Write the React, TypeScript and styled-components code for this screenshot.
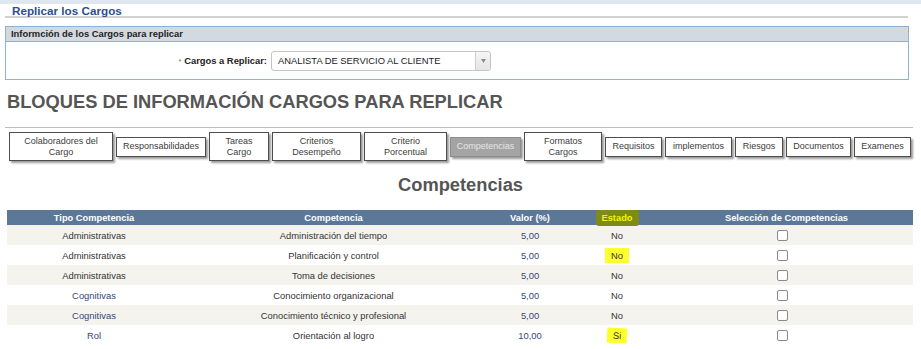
import styled, { createGlobalStyle } from "styled-components";

const GlobalStyle = createGlobalStyle`
  html, body {
    margin: 0;
    padding: 0;
    background: #ffffff;
    font-family: "Liberation Sans", Arial, sans-serif;
  }
`;

interface TabItem {
    label: string[];
    width: number;
    active?: boolean;
}

const tabs: TabItem[] = [
    { label: ["Colaboradores del", "Cargo"], width: 104 },
    { label: ["Responsabilidades"], width: 90 },
    { label: ["Tareas", "Cargo"], width: 60 },
    { label: ["Criterios", "Desempeño"], width: 89 },
    { label: ["Criterio", "Porcentual"], width: 83 },
    { label: ["Competencias"], width: 71, active: true },
    { label: ["Formatos", "Cargos"], width: 78 },
    { label: ["Requisitos"], width: 57 },
    { label: ["implementos"], width: 67 },
    { label: ["Riesgos"], width: 48 },
    { label: ["Documentos"], width: 65 },
    { label: ["Examenes"], width: 57 },
];

interface Row {
    tipo: string;
    competencia: string;
    valor: string;
    estado: string;
    mark?: "flat" | "tilt";
    blue?: boolean;
}

const rows: Row[] = [
    { tipo: "Administrativas", competencia: "Administración del tiempo", valor: "5,00", estado: "No" },
    { tipo: "Administrativas", competencia: "Planificación y control", valor: "5,00", estado: "No", mark: "flat" },
    { tipo: "Administrativas", competencia: "Toma de decisiones", valor: "5,00", estado: "No" },
    { tipo: "Cognitivas", competencia: "Conocimiento organizacional", valor: "5,00", estado: "No", blue: true },
    { tipo: "Cognitivas", competencia: "Conocimiento técnico y profesional", valor: "5,00", estado: "No", blue: true },
    { tipo: "Rol", competencia: "Orientación al logro", valor: "10,00", estado: "Si", mark: "tilt", blue: true },
];

const App = () => {
    return (
        <Page>
            <GlobalStyle />
            <TopBar />
            <TitleBar>Replicar los Cargos</TitleBar>

            <Panel>
                <PanelHeader>Informción de los Cargos para replicar</PanelHeader>
                <PanelBody>
                    <FieldLabel>
                        <Required>*</Required> Cargos a Replicar:
                    </FieldLabel>
                    <Select>
                        <span className="value">ANALISTA DE SERVICIO AL CLIENTE</span>
                        <span className="arrow">
                            <svg width="5" height="4" viewBox="0 0 5 4">
                                <path d="M0 0 L5 0 L2.5 4 Z" fill="#8a8a8a" />
                            </svg>
                        </span>
                    </Select>
                </PanelBody>
            </Panel>

            <BlockTitle>BLOQUES DE INFORMACIÓN CARGOS PARA REPLICAR</BlockTitle>
            <Rule />

            <TabRow>
                {tabs.map((t) => (
                    <Tab key={t.label.join(" ")} $width={t.width} $tall={t.label.length > 1} $active={t.active}>
                        {t.label.map((l) => (
                            <span key={l}>{l}</span>
                        ))}
                    </Tab>
                ))}
            </TabRow>

            <SectionTitle>Competencias</SectionTitle>

            <Table>
                <colgroup>
                    <col style={{ width: 174 }} />
                    <col style={{ width: 305 }} />
                    <col style={{ width: 88 }} />
                    <col style={{ width: 86 }} />
                    <col style={{ width: 253 }} />
                </colgroup>
                <thead>
                    <tr>
                        <th>Tipo Competencia</th>
                        <th>Competencia</th>
                        <th>Valor (%)</th>
                        <th>
                            <HeadMark>Estado</HeadMark>
                        </th>
                        <th>Selección de Competencias</th>
                    </tr>
                </thead>
                <tbody>
                    {rows.map((r, i) => (
                        <BodyRow key={r.competencia} $shaded={i % 2 === 0}>
                            <Cell $blue={r.blue}>{r.tipo}</Cell>
                            <Cell>{r.competencia}</Cell>
                            <Cell $blue>{r.valor}</Cell>
                            <Cell>
                                {r.mark ? <Mark $tilt={r.mark === "tilt"}>{r.estado}</Mark> : r.estado}
                            </Cell>
                            <Cell>
                                <Check />
                            </Cell>
                        </BodyRow>
                    ))}
                </tbody>
            </Table>
        </Page>
    );
};

const Page = styled.div`
    width: 921px;
    height: 349px;
    overflow: hidden;
    background: #fff;
`;

const TopBar = styled.div`
    height: 4px;
    background: #dfe6ef;
`;

const TitleBar = styled.div`
    margin: 0 13px 0 5px;
    padding: 1px 7px 0;
    height: 11px;
    line-height: 11px;
    font-size: 11.7px;
    font-weight: bold;
    color: #2d4f8f;
    border-bottom: 2px solid #d2d2d2;
`;

const Panel = styled.div`
    margin: 8px 12px 0 5px;
    border: 1px solid #8fb1d3;
`;

const PanelHeader = styled.div`
    height: 14px;
    line-height: 14px;
    padding-left: 5px;
    background: #d2d9e1;
    border-bottom: 1px solid #8fb1d3;
    font-size: 9.4px;
    font-weight: bold;
    color: #1e1e1e;
`;

const PanelBody = styled.div`
    height: 37px;
    display: flex;
    align-items: center;
    gap: 4px;
`;

const FieldLabel = styled.div`
    width: 261px;
    text-align: right;
    font-size: 9.4px;
    font-weight: bold;
    color: #222;
`;

const Required = styled.span`
    color: #6b7f9e;
    font-size: 8px;
    font-weight: normal;
`;

const Select = styled.div`
    width: 218px;
    height: 18px;
    display: flex;
    border: 1px solid #c4c4c4;
    border-radius: 3px;
    background: #fff;

    .value {
        flex: 1;
        padding-left: 6px;
        line-height: 17px;
        font-size: 9.4px;
        color: #222;
    }

    .arrow {
        width: 14px;
        display: flex;
        align-items: center;
        justify-content: center;
        border-left: 1px solid #cfcfcf;
        background: linear-gradient(#f6f6f6, #e4e4e4);
        border-radius: 0 3px 3px 0;
    }
`;

const BlockTitle = styled.h1`
    margin: 11px 0 0;
    padding-left: 7px;
    font-size: 18.3px;
    line-height: 22px;
    font-weight: bold;
    color: #555;
`;

const Rule = styled.div`
    margin: 14px 8px 0 5px;
    height: 1px;
    background: #bdbdbd;
`;

const TabRow = styled.div`
    margin-top: 4px;
    padding-left: 9px;
    height: 29px;
    display: flex;
    align-items: center;
    gap: 3px;
`;

const Tab = styled.div<{ $width: number; $tall: boolean; $active?: boolean }>`
    box-sizing: border-box;
    width: ${(p) => p.$width}px;
    height: ${(p) => (p.$tall ? 29 : 20)}px;
    display: flex;
    flex-direction: column;
    align-items: center;
    justify-content: center;
    border: 1px solid ${(p) => (p.$active ? "#8c8c8c" : "#4d4d4d")};
    background: ${(p) => (p.$active ? "#a4a4a4" : "#fff")};
    color: ${(p) => (p.$active ? "#e6e6e6" : "#3c3c3c")};
    box-shadow: 2px 2px 2px rgba(0, 0, 0, 0.4);
    font-size: 9px;
    line-height: 11px;
    white-space: nowrap;
`;

const SectionTitle = styled.h2`
    margin: 13px 0 0;
    text-align: center;
    font-size: 18.3px;
    line-height: 22px;
    font-weight: bold;
    color: #555;
`;

const Table = styled.table`
    margin: 14px 0 0 7px;
    width: 906px;
    table-layout: fixed;
    border-collapse: collapse;

    th {
        height: 15px;
        padding: 0;
        background: #5b7899;
        color: #fff;
        font-size: 9.3px;
        font-weight: bold;
        text-align: center;
    }
`;

const BodyRow = styled.tr<{ $shaded: boolean }>`
    height: 20px;
    background: ${(p) => (p.$shaded ? "#f5f3ee" : "#fff")};
`;

const Cell = styled.td<{ $blue?: boolean }>`
    padding: 0;
    text-align: center;
    font-size: 9.4px;
    color: ${(p) => (p.$blue ? "#34487a" : "#333")};
`;

const HeadMark = styled.span`
    display: inline-block;
    padding: 3px 6px;
    margin: -3px 0;
    background: #7e8b16;
    color: #f4f400;
    border-radius: 3px;
`;

const Mark = styled.span<{ $tilt?: boolean }>`
    display: inline-block;
    padding: 2px 6px;
    background: #ffff2e;
    color: #333;
    transform: ${(p) => (p.$tilt ? "rotate(3deg)" : "none")};
`;

const Check = styled.span`
    display: inline-block;
    width: 9px;
    height: 9px;
    margin-right: 8px;
    border: 1px solid #8a8a8a;
    border-radius: 2px;
    background: #fff;
    vertical-align: middle;
`;

export default App;
